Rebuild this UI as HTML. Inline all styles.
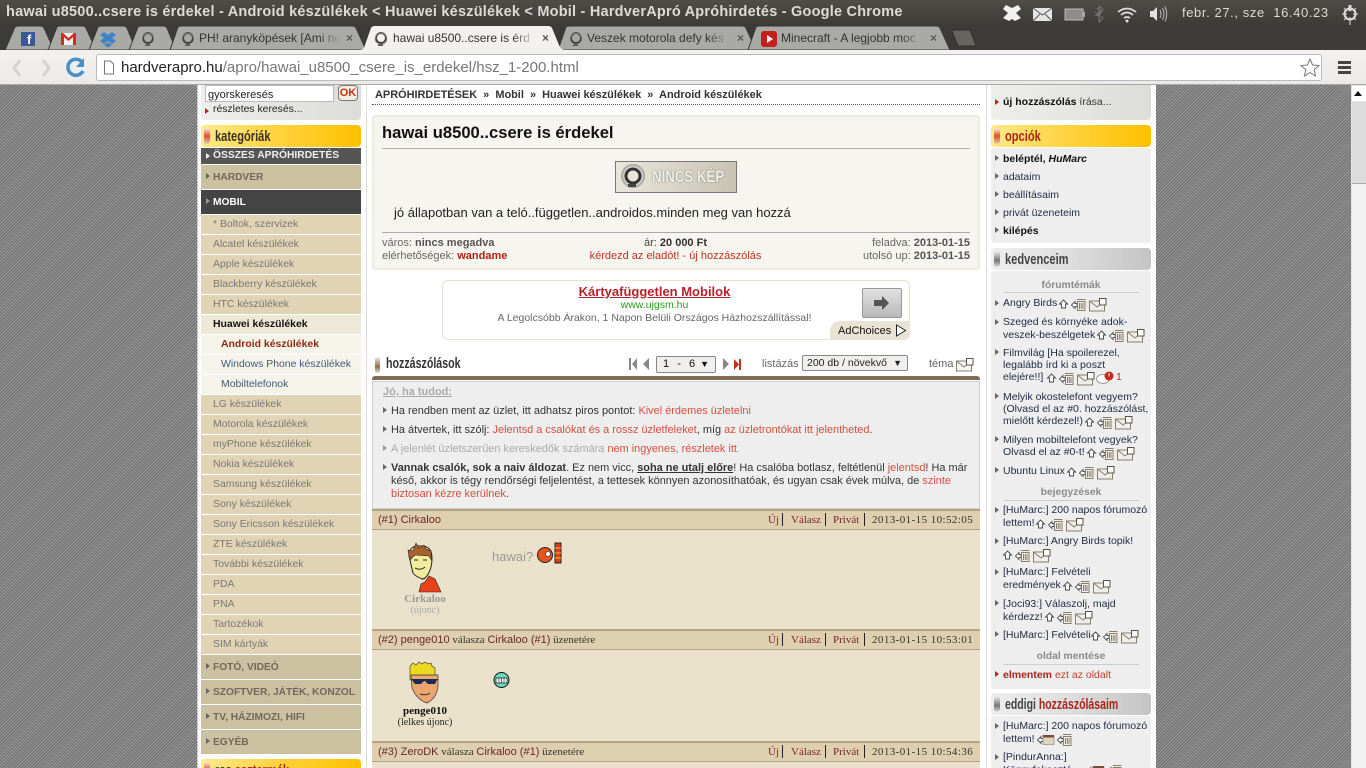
<!DOCTYPE html>
<html><head><meta charset="utf-8"><title>hawai u8500</title>
<style>
*{box-sizing:border-box}
html,body{margin:0;padding:0;width:1366px;height:768px;overflow:hidden;background:#fff}
body{position:relative;font-family:"Liberation Sans",sans-serif;font-size:11px;color:#222}
.a,.t{position:absolute}
.t{white-space:nowrap;line-height:14px;margin-top:1px}
.z{margin-top:0}
svg{position:absolute;overflow:visible}
.hatch{position:absolute;top:85px;height:683px;background:repeating-linear-gradient(135deg,#6e6e6e 0 1.1px,#989898 1.1px 2.2px)}
.tab{position:absolute;top:25px;height:25px}
.tabt{position:absolute;top:30px;font-size:12px;line-height:16px;white-space:nowrap;overflow:hidden;color:#333;-webkit-mask-image:linear-gradient(90deg,#000 85%,transparent);mask-image:linear-gradient(90deg,#000 85%,transparent)}
.x{position:absolute;top:31px;font-size:12px;line-height:14px;color:#555;font-weight:bold}
.row{position:absolute;left:201px;width:160px;height:19px;background:#e0d4b4;color:#777;line-height:20px;padding-left:12px;font-size:10.450px}
.big{position:absolute;left:201px;width:160px;height:24px;background:#cbc0a0;color:#70695c;font-weight:bold;line-height:25px;padding-left:12px;font-size:10.200px}
.sub{background:#f6f3ea;padding-left:20px;color:#3e5a78}
.hd{position:absolute;width:160px;height:22px;border-radius:4px;background:linear-gradient(90deg,#ffe98a,#ffd23c 50%,#ffc000);font-family:"Liberation Sans",sans-serif;font-weight:bold;font-size:15px;line-height:23px;padding-left:14px;white-space:nowrap}
.hd i{position:absolute;left:3px;top:3px;width:6px;height:16px;border-radius:3px;background:linear-gradient(#f5f0e0,#e44b2a 50%,#d8d0b0)}
.hd b{display:inline-block;transform:scaleX(.74);transform-origin:left}
.gh{background:linear-gradient(90deg,#eee,#ddd 50%,#c4c4c4)}
.gh i{background:linear-gradient(#eee,#777 60%,#ddd)}
.ar{position:absolute;width:0;height:0;border-left:4px solid #666;border-top:3.500px solid transparent;border-bottom:3.500px solid transparent}
.rd{border-left-color:#b3261a}
.lt{border-left-color:#eee}
.panel{position:absolute;left:991px;width:160px;background:#eeeeee;border-radius:3px}
.r{color:#1c2a44}
.red{color:#d4503c}
.ph{position:absolute;left:372px;width:608px;background:#decfae;border-top:2px solid #b1a383;border-bottom:1px solid #b1a383;height:21px}
.ph .t{font-family:"Liberation Serif",serif;top:1px}
.ph .pn,.pn{color:#6d2630;font-family:"Liberation Sans",sans-serif;font-size:11px}
.ph .dt{color:#333;font-size:11px;letter-spacing:.42px;left:500px}
.nav{font-family:"Liberation Serif",serif;color:#7c2430;font-size:11px}
.vb{position:absolute;top:2px;width:1px;height:13px;background:#222}
.inf{font-size:10.950px}
</style></head><body>
<svg width="0" height="0" style="position:absolute"><defs>
<symbol id="ic" viewBox="0 0 52 13" overflow="visible">
<path d="M4.500 2 L8.500 6 H6.500 V10 H2.500 V6 H.5 Z" fill="#fff" stroke="#444" stroke-width=".9"/>
<path d="M12.500 7 L16 3.500 V5.500 H18 V8.500 H16 V10.500 Z" fill="#fff" stroke="#555" stroke-width=".9"/>
<rect x="18.500" y="3.500" width="7.500" height="9" fill="#eee" stroke="#8a7d66"/><path d="M20.500 5v6M22.300 5v6M24 5v6M18 1.500h8.500" stroke="#8a7d66" fill="none"/>
<rect x="30.500" y="3" width="15" height="10" fill="#eee" stroke="#8a7d66"/><path d="M30.500 3l7.500 6 7.500-6" fill="none" stroke="#8a7d66"/>
<rect x="40.500" y=".5" width="6.500" height="6.500" fill="#fff" stroke="#554"/>
</symbol>
<symbol id="mail" viewBox="0 0 18 13" overflow="visible">
<rect x=".5" y="3" width="15" height="10" fill="#f4f4f4" stroke="#8a7d66"/><path d="M.5 3l7.500 6 7.500-6" fill="none" stroke="#8a7d66"/>
<rect x="10.500" y=".5" width="6.500" height="6.500" fill="#fff" stroke="#554"/>
</symbol>
<symbol id="ic2" viewBox="0 0 34 13" overflow="visible">
<path d="M.5 7 L4 3.500 V5.500 H6 V8.500 H4 V10.500 Z" fill="#fff" stroke="#555" stroke-width=".9"/>
<rect x="6" y="2.500" width="11" height="9" fill="#ddd5bd" stroke="#8a7d66" stroke-width=".6"/><rect x="6" y="2" width="11" height="2.500" fill="#7a4a3a"/>
<path d="M20.500 7 L24 3.500 V5.500 H26 V8.500 H24 V10.500 Z" fill="#fff" stroke="#555" stroke-width=".9"/>
<rect x="26.500" y="3.500" width="7.500" height="9" fill="#eee" stroke="#8a7d66"/><path d="M28.500 5v6M30.300 5v6M32 5v6M26 1.500h8.500" stroke="#8a7d66" fill="none"/>
</symbol>
<symbol id="ph" viewBox="0 0 14 14"><circle cx="7" cy="6" r="5" fill="none" stroke="#444" stroke-width="2"/><path d="M4 13h5" stroke="#444" stroke-width="2"/><circle cx="7" cy="7" r="6" fill="none" stroke="#aaa" stroke-width=".6"/></symbol>
</defs></svg>

<!-- title bar -->
<div class="a" style="left:0;top:0;width:1366px;height:25px;background:linear-gradient(#4f4d48,#3c3b37)"></div>
<div class="a" style="left:0;top:25px;width:1366px;height:25px;background:#3c3b37"></div>
<div class="t z" style="left:6px;top:4px;font-size:14.500px;line-height:17px;font-weight:bold;color:#dfdbd2;letter-spacing:.22px">hawai u8500..csere is érdekel - Android készülékek &lt; Huawei készülékek &lt; Mobil - HardverApró Apróhirdetés - Google Chrome</div>
<!-- tray -->
<svg style="left:1000px;top:3px" width="366" height="20">
<path d="M7 2l6 3 6-3 3 4-5 4 5 5-6 3-3-2-3 2-6-3 5-5-5-4z" fill="#f2f2f0" transform="translate(-1 0)"/>
<rect x="33" y="5" width="19" height="13" fill="#e6e6e6" rx="1"/><path d="M33 5l9.500 7 9.500-7M33 18l7-7M52 18l-7-7" stroke="#555" fill="none"/>
<rect x="65" y="6" width="18" height="11" fill="#8f8d88" stroke="#bbb"/><rect x="83" y="9" width="2" height="5" fill="#aaa"/>
<path d="M97 5l5 4-5 4 M99 3v16l4-4-8-6M99 3l4 4-8 6" stroke="#777" fill="none"/>
<path d="M118 9q9-7 18 0M121 12q6-5 12 0M124 15q3-2 6 0" stroke="#ddd" stroke-width="1.700" fill="none"/><circle cx="127" cy="18" r="1.500" fill="#ddd"/>
<path d="M150 8h3l4-4v14l-4-4h-3z" fill="#e2e2e2"/><path d="M160 7q2 4 0 8M162.500 5q3 6 0 12M165 3.500q3.500 7.500 0 15" stroke="#bbb" fill="none"/>
<circle cx="350" cy="11" r="5.500" fill="none" stroke="#ddd" stroke-width="2"/><path d="M350 2v7" stroke="#ddd" stroke-width="3"/><path d="M350 2v20M342 11h16M344 5l2 2M356 5l-2 2M344 17l2-2M356 17l-2-2" stroke="#ddd"/><circle cx="350" cy="11" r="3" fill="#3f3e3a"/>
</svg>
<div class="t z" style="left:1182px;top:4px;font-size:13px;line-height:17px;color:#dfdbd2;letter-spacing:.6px">febr. 27., sze&nbsp; 16.40.23</div>

<!-- tabs -->
<svg style="left:0;top:25px" width="1000" height="25">
<g fill="#a9a9a5" stroke="#3a3935">
<path d="M5 25 L15 2 Q16 1 19 1 H40 Q43 1 44 3 L54 25Z"/>
<path d="M48 25 L57 2 Q58 1 61 1 H82 Q85 1 86 3 L96 25Z"/>
<path d="M89 25 L98 2 Q99 1 102 1 H123 Q126 1 127 3 L136 25Z"/>
<path d="M129 25 L138 2 Q139 1 142 1 H163 Q166 1 167 3 L176 25Z"/>
<path d="M170 25 L178 2 Q179 1 182 1 H352 Q355 1 356 3 L366 25Z"/>
<path d="M558 25 L566 2 Q567 1 570 1 H742 Q745 1 746 3 L756 25Z"/>
<path d="M748 25 L756 2 Q757 1 760 1 H936 Q939 1 940 3 L950 25Z"/>
</g>
<path d="M360 25 Q364 25 365 20 L371 3 Q372 1 375 1 H548 Q551 1 552 3 L559 20 Q561 25 565 25Z" fill="#f2f1f0"/>
<path d="M952 6 Q952 5 954 5 H970 L976 20 Q976 21 974 21 H958 Z" fill="#65645f" stroke="#2f2e2b"/>
</svg>
<!-- favicons -->
<div class="a" style="left:21px;top:32px;width:14px;height:14px;background:#3b5998"></div><div class="t z" style="left:27px;top:33px;color:#fff;font-weight:bold;font-size:13px">f</div>
<svg style="left:61px;top:33px" width="16" height="13"><rect width="15" height="12" fill="#eee"/><path d="M0 0v12h3V4l4.500 4L12 4v8h3V0h-2L7.500 5 2 0z" fill="#d02c20"/></svg>
<svg style="left:100px;top:31px" width="16" height="17"><path d="M4 1l4 3 4-3 4 3-4 3 4 3-4 3-4-3-4 3-4-3 4-3-4-3z" fill="#3d85c6"/><path d="M4 14l4 2.500 4-2.500-4-2.500z" fill="#3d85c6"/></svg>
<svg style="left:141px;top:32px" width="14" height="15"><use href="#ph" width="14" height="14"/></svg>
<svg style="left:181px;top:32px" width="14" height="15"><use href="#ph" width="14" height="14"/></svg>
<svg style="left:374px;top:32px" width="14" height="15"><use href="#ph" width="14" height="14"/></svg>
<svg style="left:569px;top:32px" width="14" height="15"><use href="#ph" width="14" height="14"/></svg>
<svg style="left:761px;top:31px" width="16" height="16"><rect width="16" height="16" rx="3" fill="#c4201b"/><path d="M6 4l6 4-6 4z" fill="#fff"/></svg>
<div class="tabt" style="left:199px;width:142px">PH! aranyköpések [Ami ne</div>
<div class="tabt" style="left:393px;width:142px">hawai u8500..csere is érd</div>
<div class="tabt" style="left:587px;width:142px">Veszek motorola defy kés</div>
<div class="tabt" style="left:781px;width:142px">Minecraft - A legjobb moc</div>
<div class="x" style="left:346px">×</div><div class="x" style="left:542px">×</div><div class="x" style="left:737px">×</div><div class="x" style="left:930px">×</div>

<!-- toolbar -->
<div class="a" style="left:0;top:50px;width:1366px;height:35px;background:linear-gradient(#f2f1f0,#ebeae8);border-bottom:1px solid #a8a8a8"></div>
<svg style="left:0;top:50px" width="100" height="35">
<path d="M20 10l-6 8 6 8" fill="none" stroke="#d4d4d4" stroke-width="3"/>
<path d="M43 10l6 8-6 8" fill="none" stroke="#d4d4d4" stroke-width="3"/>
<path d="M82 12a8 8 0 1 0 1 9" fill="none" stroke="#4a90c8" stroke-width="3.500"/><path d="M84 8v9h-8z" fill="#4a90c8"/>
</svg>
<div class="a" style="left:96px;top:54px;width:1226px;height:27px;background:#fff;border:1px solid #bbb;border-radius:3px"></div>
<svg style="left:103px;top:60px" width="12" height="16"><path d="M1.500 1h6l3 3v10h-9z" fill="#fff" stroke="#777"/></svg>
<div class="t z" style="left:121px;top:59px;font-size:15px;line-height:18px;color:#222">hardverapro.hu<span style="color:#777">/apro/hawai_u8500_csere_is_erdekel/hsz_1-200.html</span></div>
<svg style="left:1300px;top:58px" width="20" height="20"><path d="M10 1l2.600 6 6.400.500-4.900 4.200 1.500 6.300L10 14.600 4.400 18l1.500-6.300L1 7.500 7.400 7z" fill="#fff" stroke="#777"/></svg>
<div class="a" style="left:1338px;top:61px;width:13px;height:3px;background:#444"></div><div class="a" style="left:1338px;top:66px;width:13px;height:3px;background:#444"></div><div class="a" style="left:1338px;top:71px;width:13px;height:3px;background:#444"></div>

<!-- page bg -->
<div class="hatch" style="left:0;width:197px"></div>
<div class="hatch" style="left:1156px;width:195px"></div>
<div class="a" style="left:1351px;top:85px;width:15px;height:683px;background:#e4e4e4"></div>
<div class="a" style="left:1352px;top:86px;width:14px;height:15px;background:#fff"></div>
<svg style="left:1354px;top:91px" width="10" height="6"><path d="M4 0l4 5H0z" fill="#111"/></svg>
<div class="a" style="left:1352px;top:102px;width:14px;height:82px;background:#dcdcdc;border-bottom:1px solid #aaa"></div>
<div class="a" style="left:1352px;top:184px;width:14px;height:584px;background:#f2f2f2"></div>
<div class="a" style="left:366px;top:85px;width:1px;height:683px;background:#ddd"></div>
<div class="a" style="left:986px;top:85px;width:1px;height:683px;background:#ddd"></div>
<div class="a" style="left:197px;top:85px;width:1px;height:683px;background:#ccc"></div>

<!-- left col -->
<div class="a" style="left:201px;top:85px;width:160px;height:35px;background:linear-gradient(90deg,#eeeeec,#dcdcd8);border-radius:0 0 4px 4px"></div>
<div class="t z" style="left:205px;top:85px;width:129px;height:17px;background:#fff;border:1px solid #bbb;line-height:18px;padding-left:2px;font-size:11px;color:#222">gyorskeresés</div>
<div class="t z" style="left:338px;top:85px;width:20px;height:16px;background:#f3ece0;border:1px solid #777;border-radius:4px;font-weight:bold;color:#c33118;text-align:center;line-height:14px;font-size:11px">OK</div>
<div class="ar rd" style="left:205px;top:108px"></div>
<div class="t" style="left:213px;top:102px;font-size:10.400px;color:#222">részletes keresés...</div>
<div class="hd" style="left:201px;top:125px;color:#3a3226"><i></i><b>kategóriák</b></div>
<div class="a" style="left:201px;top:148px;width:160px;height:16px;background:#555;color:#eee;font-weight:bold;font-size:10.300px;line-height:16px;padding-left:12px">ÖSSZES APRÓHIRDETÉS</div><div class="ar lt" style="left:206px;top:153px"></div>
<div class="big" style="top:165px">HARDVER</div><div class="ar" style="left:206px;top:173px"></div>
<div class="big" style="top:190px;background:#444;color:#fff">MOBIL</div><div class="ar" style="left:206px;top:198px;border-left-color:#999"></div>
<div class="row" style="top:215px">* Boltok, szervizek</div>
<div class="row" style="top:235px">Alcatel készülékek</div>
<div class="row" style="top:255px">Apple készülékek</div>
<div class="row" style="top:275px">Blackberry készülékek</div>
<div class="row" style="top:295px">HTC készülékek</div>
<div class="row" style="top:315px;background:#eee8d6;color:#111;font-weight:bold">Huawei készülékek</div>
<div class="row sub" style="top:335px;color:#8f2a12;font-weight:bold">Android készülékek</div>
<div class="row sub" style="top:355px">Windows Phone készülékek</div>
<div class="row sub" style="top:375px">Mobiltelefonok</div>
<div class="row" style="top:395px">LG készülékek</div>
<div class="row" style="top:415px">Motorola készülékek</div>
<div class="row" style="top:435px">myPhone készülékek</div>
<div class="row" style="top:455px">Nokia készülékek</div>
<div class="row" style="top:475px">Samsung készülékek</div>
<div class="row" style="top:495px">Sony készülékek</div>
<div class="row" style="top:515px">Sony Ericsson készülékek</div>
<div class="row" style="top:535px">ZTE készülékek</div>
<div class="row" style="top:555px">További készülékek</div>
<div class="row" style="top:575px">PDA</div>
<div class="row" style="top:595px">PNA</div>
<div class="row" style="top:615px">Tartozékok</div>
<div class="row" style="top:635px">SIM kártyák</div>
<div class="big" style="top:655px">FOTÓ, VIDEÓ</div><div class="ar" style="left:206px;top:663px"></div>
<div class="big" style="top:680px">SZOFTVER, JÁTÉK, KONZOL</div><div class="ar" style="left:206px;top:688px"></div>
<div class="big" style="top:705px">TV, HÁZIMOZI, HIFI</div><div class="ar" style="left:206px;top:713px"></div>
<div class="big" style="top:730px">EGYÉB</div><div class="ar" style="left:206px;top:738px"></div>
<div class="hd" style="left:201px;top:759px;color:#3a3226"><i></i><b>rss <span style="color:#a8261a">esztermék</span></b></div>

<!-- main -->
<div class="t" style="left:375px;top:87px;font-weight:bold;color:#333;font-size:10.950px">APRÓHIRDETÉSEK &nbsp;»&nbsp; Mobil &nbsp;»&nbsp; Huawei készülékek &nbsp;»&nbsp; Android készülékek</div>
<div class="a" style="left:372px;top:104px;width:608px;border-top:1px dotted #555"></div>
<div class="a" style="left:372px;top:115px;width:608px;height:155px;background:#f7f5ef;border:2px solid #efebdc;border-radius:3px"></div>
<div class="t z" style="left:382px;top:123px;font-size:16.600px;line-height:19px;font-weight:bold;color:#111">hawai u8500..csere is érdekel</div>
<div class="a" style="left:382px;top:148px;width:588px;height:1px;background:#aaa"></div>
<div class="a" style="left:615px;top:161px;width:122px;height:32px;background:linear-gradient(90deg,#e9e5da,#c9c3b3);border:1px solid #777"></div>
<svg style="left:621px;top:164px" width="26" height="26"><circle cx="12" cy="12" r="11" fill="#d8d4c8" stroke="#aaa" stroke-width="2"/><circle cx="12" cy="12" r="7" fill="#e8e4d8" stroke="#333" stroke-width="3"/><rect x="7" y="20" width="8" height="3" fill="#444"/></svg>
<div class="t z" style="left:652px;top:168px;font-size:17px;line-height:18px;font-weight:bold;color:#f0efe8;text-shadow:0 0 1.500px #555;transform:scaleX(.78);transform-origin:left">NINCS KÉP</div>
<div class="t" style="left:394px;top:204px;font-size:13px;line-height:16px;color:#222">jó állapotban van a teló..független..androidos.minden meg van hozzá</div>
<div class="a" style="left:382px;top:232px;width:588px;height:1px;background:#aaa"></div>
<div class="t" style="left:382px;top:235px;color:#666">város: <b style="color:#555">nincs megadva</b></div>
<div class="t" style="left:382px;top:248px;color:#666">elérhetőségek: <b style="color:#b2220f">wandame</b></div>
<div class="t" style="left:370px;width:608px;top:235px;text-align:center;color:#444;padding-left:3px">ár: <b style="color:#333">20 000 Ft</b></div>
<div class="t" style="left:370px;width:608px;top:248px;text-align:center;color:#b8341c;padding-left:3px">kérdezd az eladót! - új hozzászólás</div>
<div class="t" style="right:396px;top:235px;color:#666">feladva: <b style="color:#555">2013-01-15</b></div>
<div class="t" style="right:396px;top:248px;color:#666">utolsó up: <b style="color:#555">2013-01-15</b></div>

<!-- ad -->
<div class="a" style="left:442px;top:280px;width:468px;height:60px;background:#fff;border:1px solid #e9e3cd;border-radius:6px"></div>
<div class="t" style="left:442px;top:284px;width:425px;text-align:center;font-size:13px;font-weight:bold;color:#b8202a;text-decoration:underline">Kártyafüggetlen Mobilok</div>
<div class="t" style="left:442px;top:297px;width:425px;text-align:center;color:#2a9a1a;font-size:10.500px">www.ujgsm.hu</div>
<div class="t" style="left:442px;top:310px;width:425px;text-align:center;color:#666;font-size:10.500px">A Legolcsóbb Árakon, 1 Napon Belüli Országos Házhozszállítással!</div>
<div class="a" style="left:862px;top:288px;width:40px;height:30px;background:linear-gradient(#e2e2e2,#b8b8b8);border:1px solid #999;border-radius:2px"></div>
<svg style="left:873px;top:295px" width="18" height="16"><path d="M1 5h8V1l7 7-7 7v-4H1z" fill="#555"/></svg>
<div class="a" style="left:830px;top:321px;width:80px;height:19px;background:#e9e3d3;border-radius:10px 0 6px 0"></div>
<div class="t" style="left:838px;top:323px;color:#111;font-size:11px">AdChoices</div>
<svg style="left:895px;top:324px" width="12" height="13"><path d="M1.500 1v11l9-5.500z" fill="#fff" stroke="#222"/></svg>

<!-- hozzaszolasok -->
<div class="a" style="left:375px;top:357px;width:5px;height:16px;border-radius:3px;background:linear-gradient(#eee,#8a7040 60%,#ddd)"></div>
<div class="t z" style="left:386px;top:357px;font-size:15px;font-weight:bold;color:#333;transform:scaleX(.71);transform-origin:left">hozzászólások</div>
<svg style="left:628px;top:357px" width="125" height="16">
<path d="M1 1h2v12H1zM9 1v12l-5-6z" fill="#888"/><path d="M21 1v12l-6-6z" fill="#888"/>
<path d="M95 1v12l6-6z" fill="#888"/><path d="M106 2v11l5-5.500z" fill="#c33118"/><path d="M111 2h2v11h-2z" fill="#c33118"/>
</svg>
<div class="t z" style="left:656px;top:356px;width:60px;height:17px;background:#f0efee;border:1px solid #888;border-radius:2px;line-height:15px;color:#111;padding-left:6px;word-spacing:1px">1 &nbsp;- &nbsp;6<span class="a" style="right:6px;top:0;font-size:9px">▼</span></div>
<div class="t" style="left:762px;top:356px;color:#666">listázás</div>
<div class="t" style="left:802px;top:354px;width:106px;height:16px;background:#f0efee;border:1px solid #888;border-radius:2px;line-height:14px;color:#222;padding-left:4px;font-size:10.500px">200 db / növekvő<span class="a" style="right:5px;top:0;font-size:9px">▼</span></div>
<div class="t" style="left:929px;top:356px;color:#666">téma</div>
<svg style="left:956px;top:358px" width="18" height="13"><use href="#mail" width="18" height="13"/></svg>
<div class="a" style="left:372px;top:376px;width:608px;height:4px;background:#7d6d52;border-radius:3px 3px 0 0"></div>

<!-- info -->
<div class="a" style="left:372px;top:381px;width:608px;height:128px;background:#eeeeee;border:1px solid #ccc"></div>
<div class="t" style="left:383px;top:384px;font-weight:bold;color:#aaa;text-decoration:underline">Jó, ha tudod:</div>
<div class="ar" style="left:383px;top:407px"></div>
<div class="t inf" style="left:391px;top:403px;color:#333">Ha rendben ment az üzlet, itt adhatsz piros pontot: <span class="red">Kivel érdemes üzletelni</span></div>
<div class="ar" style="left:383px;top:426px"></div>
<div class="t inf" style="left:391px;top:422px;color:#333">Ha átvertek, itt szólj: <span class="red">Jelentsd a csalókat és a rossz üzletfeleket</span>, míg <span class="red">az üzletrontókat itt jelentheted</span>.</div>
<div class="ar" style="left:383px;top:445px;border-left-color:#999"></div>
<div class="t inf" style="left:391px;top:441px;color:#aaa">A jelenlét üzletszerűen kereskedők számára <span class="red">nem ingyenes, részletek itt</span>.</div>
<div class="ar" style="left:383px;top:464px"></div>
<div class="t inf" style="left:391px;top:460px;color:#333"><b>Vannak csalók, sok a naiv áldozat</b>. Ez nem vicc, <b style="text-decoration:underline">soha ne utalj előre</b>! Ha csalóba botlasz, feltétlenül <span class="red">jelentsd</span>! Ha már</div>
<div class="t inf" style="left:391px;top:473px;color:#333">késő, akkor is tégy rendőrségi feljelentést, a tettesek könnyen azonosíthatóak, és ugyan csak évek múlva, de <span class="red">szinte</span></div>
<div class="t inf" style="left:391px;top:486px;color:#333"><span class="red">biztosan kézre kerülnek</span>.</div>

<!-- posts -->
<div class="a" style="left:372px;top:510px;width:608px;height:258px;background:#e9e1c9"></div>
<div class="ph" style="top:509px"><div class="t pn" style="left:6px">(#1) Cirkaloo</div>
<div class="t nav" style="left:396px">Új</div><div class="vb" style="left:410px"></div><div class="t nav" style="left:419px">Válasz</div><div class="vb" style="left:453px"></div><div class="t nav" style="left:461px">Privát</div><div class="vb" style="left:492px"></div><div class="t dt">2013-01-15 10:52:05</div></div>
<div class="ph" style="top:629px"><div class="t" style="left:6px;font-size:11px;color:#333"><span class="pn">(#2) penge010</span> válasza <span class="pn">Cirkaloo (#1)</span> üzenetére</div>
<div class="t nav" style="left:396px">Új</div><div class="vb" style="left:410px"></div><div class="t nav" style="left:419px">Válasz</div><div class="vb" style="left:453px"></div><div class="t nav" style="left:461px">Privát</div><div class="vb" style="left:492px"></div><div class="t dt">2013-01-15 10:53:01</div></div>
<div class="ph" style="top:741px"><div class="t" style="left:6px;font-size:11px;color:#333"><span class="pn">(#3) ZeroDK</span> válasza <span class="pn">Cirkaloo (#1)</span> üzenetére</div>
<div class="t nav" style="left:396px">Új</div><div class="vb" style="left:410px"></div><div class="t nav" style="left:419px">Válasz</div><div class="vb" style="left:453px"></div><div class="t nav" style="left:461px">Privát</div><div class="vb" style="left:492px"></div><div class="t dt">2013-01-15 10:54:36</div></div>

<svg style="left:405px;top:542px" width="40" height="52">
<path d="M4 14Q4 3 16 4Q27 4 27 16Q27 30 19 37Q12 36 8 31Z" fill="#f2ec9c" stroke="#222"/>
<path d="M4 14L3 8l5 1 3-8 3 5 5-3 2 4 5 2 1 10-3-5-14-1-5 5z" fill="#a8612c" stroke="#222" stroke-width=".6"/>
<path d="M9 18h4M18 18h4M10 26q5 3 10-1" stroke="#222" fill="none"/>
<path d="M12 33q4 5 8 2l-3 3z" fill="#6b4a20"/>
<path d="M14 50l2-8 4-2 4-6 6 3 6 13z" fill="#e8431a" stroke="#222" stroke-width=".6"/>
</svg>
<div class="t z" style="left:395px;top:592px;width:60px;text-align:center;font-family:'Liberation Serif',serif;font-weight:bold;color:#999;font-size:11px">Cirkaloo</div>
<div class="t z" style="left:395px;top:604px;width:60px;text-align:center;font-family:'Liberation Serif',serif;color:#aaa;font-size:10px">(újonc)</div>
<div class="t" style="left:492px;top:548px;font-size:13px;line-height:16px;color:#999">hawai?</div>
<svg style="left:536px;top:542px" width="26" height="22"><circle cx="9" cy="13" r="7.500" fill="#e8541e" stroke="#222"/><circle cx="12" cy="12" r="2.500" fill="#fff" stroke="#222" stroke-width=".6"/><rect x="19" y="1" width="6" height="20" fill="#d8401a" stroke="#222"/><path d="M19 6h6M19 11h6M19 16h6" stroke="#f0c040"/></svg>

<svg style="left:407px;top:660px" width="36" height="46">
<path d="M3 6l3-3 3 2 3-3 3 2 3-2 3 2 3-1 1 3 3 2v12H3z" fill="#ecd81e" stroke="#333" stroke-width=".6"/>
<path d="M4 15H31V26Q30 38 20 43Q10 40 5 28Z" fill="#eba56e" stroke="#333" stroke-width=".7"/>
<path d="M3 19h29l-2 1-2 4h-7l-3-3h-1l-3 3H8l-3-4z" fill="#1d2a54"/>
<path d="M13 34q6 2 10-1" stroke="#333" fill="none"/>
</svg>
<div class="t z" style="left:395px;top:704px;width:60px;text-align:center;font-family:'Liberation Serif',serif;font-weight:bold;color:#111;font-size:11px">penge010</div>
<div class="t z" style="left:390px;top:716px;width:70px;text-align:center;font-family:'Liberation Serif',serif;color:#222;font-size:10px">(lelkes újonc)</div>
<svg style="left:493px;top:672px" width="18" height="16"><circle cx="8.500" cy="8" r="7.500" fill="#66dcc0" stroke="#111"/><rect x="3" y="6" width="11" height="5" fill="#fff" stroke="#111" stroke-width=".7"/><path d="M6 6v5M8.500 6v5M11 6v5" stroke="#111" stroke-width=".6"/></svg>

<!-- right col -->
<div class="a" style="left:991px;top:85px;width:160px;height:35px;background:linear-gradient(90deg,#eeeeec,#dcdcd8);border-radius:0 0 4px 4px"></div>
<div class="ar rd" style="left:995px;top:99px"></div>
<div class="t" style="left:1003px;top:94px;font-size:10.500px;color:#333"><b style="color:#111">új hozzászólás</b> írása...</div>
<div class="hd" style="left:991px;top:125px;color:#a8261a"><i></i><b>opciók</b></div>
<div class="panel" style="top:148px;height:95px"></div>
<div class="ar" style="left:995px;top:155px"></div><div class="t" style="left:1003px;top:151px;font-weight:bold;color:#111;font-size:10.500px">beléptél, <i>HuMarc</i></div>
<div class="ar" style="left:995px;top:173px"></div><div class="t r" style="left:1003px;top:169px;font-size:10.500px">adataim</div>
<div class="ar" style="left:995px;top:191px"></div><div class="t r" style="left:1003px;top:187px;font-size:10.500px">beállításaim</div>
<div class="ar" style="left:995px;top:209px"></div><div class="t r" style="left:1003px;top:205px;font-size:10.500px">privát üzeneteim</div>
<div class="ar" style="left:995px;top:227px"></div><div class="t" style="left:1003px;top:223px;font-weight:bold;color:#111;font-size:10.500px">kilépés</div>

<div class="hd gh" style="left:991px;top:248px;color:#444"><i></i><b>kedvenceim</b></div>
<div class="panel" style="top:271px;height:418px"></div>
<div class="t" style="left:1003px;top:278px;width:136px;text-align:center;font-weight:bold;color:#8a8a8a;font-size:10.300px">fórumtémák</div>
<div class="a" style="left:1003px;top:292px;width:136px;height:1px;background:#ccc"></div>

<div class="ar" style="left:995px;top:300px"></div><div class="t r" style="left:1003px;top:295px;font-size:10.500px">Angry Birds</div>
<svg style="left:1059px;top:298px" width="52" height="13"><use href="#ic" width="52" height="13"/></svg>
<div class="ar" style="left:995px;top:319px"></div><div class="t r" style="left:1003px;top:314px;font-size:10.500px">Szeged és környéke adok-</div>
<div class="t r" style="left:1003px;top:327px;font-size:10.500px">veszek-beszélgetek</div>
<svg style="left:1097px;top:329px" width="52" height="13"><use href="#ic" width="52" height="13"/></svg>
<div class="ar" style="left:995px;top:349px"></div><div class="t r" style="left:1003px;top:345px;font-size:10.500px">Filmvilág [Ha spoilerezel,</div>
<div class="t r" style="left:1003px;top:357px;font-size:10.500px">legalább írd ki a poszt</div>
<div class="t r" style="left:1003px;top:369px;font-size:10.500px">elejére!!]</div>
<svg style="left:1047px;top:372px" width="52" height="13"><use href="#ic" width="52" height="13"/></svg>
<svg style="left:1096px;top:370px" width="20" height="15"><ellipse cx="7" cy="9" rx="6.500" ry="4.500" fill="#fff" stroke="#999"/><circle cx="13" cy="6" r="4.500" fill="#c8281c"/><path d="M13 3v3.500" stroke="#fff"/></svg>
<div class="t" style="left:1116px;top:369px;color:#c8281c;font-size:10.500px">1</div>
<div class="ar" style="left:995px;top:393px"></div><div class="t r" style="left:1003px;top:389px;font-size:10.500px">Melyik okostelefont vegyem?</div>
<div class="t r" style="left:1003px;top:401px;font-size:10.500px">(Olvasd el az #0. hozzászólást,</div>
<div class="t r" style="left:1003px;top:413px;font-size:10.500px">mielőtt kérdezel!)</div>
<svg style="left:1085px;top:416px" width="52" height="13"><use href="#ic" width="52" height="13"/></svg>
<div class="ar" style="left:995px;top:436px"></div><div class="t r" style="left:1003px;top:432px;font-size:10.500px">Milyen mobiltelefont vegyek?</div>
<div class="t r" style="left:1003px;top:444px;font-size:10.500px">Olvasd el az #0-t!</div>
<svg style="left:1087px;top:447px" width="52" height="13"><use href="#ic" width="52" height="13"/></svg>
<div class="ar" style="left:995px;top:467px"></div><div class="t r" style="left:1003px;top:463px;font-size:10.500px">Ubuntu Linux</div>
<svg style="left:1067px;top:466px" width="52" height="13"><use href="#ic" width="52" height="13"/></svg>
<div class="t" style="left:1003px;top:485px;width:136px;text-align:center;font-weight:bold;color:#8a8a8a;font-size:10.300px">bejegyzések</div>
<div class="a" style="left:1003px;top:500px;width:136px;height:1px;background:#ccc"></div>
<div class="ar" style="left:995px;top:507px"></div><div class="t r" style="left:1003px;top:502px;font-size:10.500px">[HuMarc:] 200 napos fórumozó</div>
<div class="t r" style="left:1003px;top:515px;font-size:10.500px">lettem!</div>
<svg style="left:1036px;top:518px" width="52" height="13"><use href="#ic" width="52" height="13"/></svg>
<div class="ar" style="left:995px;top:538px"></div><div class="t r" style="left:1003px;top:533px;font-size:10.500px">[HuMarc:] Angry Birds topik!</div>
<svg style="left:1003px;top:549px" width="52" height="13"><use href="#ic" width="52" height="13"/></svg>
<div class="ar" style="left:995px;top:569px"></div><div class="t r" style="left:1003px;top:564px;font-size:10.500px">[HuMarc:] Felvételi</div>
<div class="t r" style="left:1003px;top:577px;font-size:10.500px">eredmények</div>
<svg style="left:1063px;top:580px" width="52" height="13"><use href="#ic" width="52" height="13"/></svg>
<div class="ar" style="left:995px;top:600px"></div><div class="t r" style="left:1003px;top:596px;font-size:10.500px">[Joci93:] Válaszolj, majd</div>
<div class="t r" style="left:1003px;top:609px;font-size:10.500px">kérdezz!</div>
<svg style="left:1045px;top:611px" width="52" height="13"><use href="#ic" width="52" height="13"/></svg>
<div class="ar" style="left:995px;top:631px"></div><div class="t r" style="left:1003px;top:627px;font-size:10.500px">[HuMarc:] Felvételi</div>
<svg style="left:1091px;top:630px" width="52" height="13"><use href="#ic" width="52" height="13"/></svg>
<div class="t" style="left:1003px;top:649px;width:136px;text-align:center;font-weight:bold;color:#8a8a8a;font-size:10.300px">oldal mentése</div>
<div class="a" style="left:1003px;top:664px;width:136px;height:1px;background:#ccc"></div>
<div class="ar rd" style="left:995px;top:671px"></div><div class="t" style="left:1003px;top:667px;font-size:10.500px;color:#c0402a"><b style="color:#a8261a">elmentem</b> ezt az oldalt</div>

<div class="hd gh" style="left:991px;top:693px;color:#444"><i></i><b style="transform:scaleX(.7)">eddigi <span style="color:#a8261a">hozzászólásaim</span></b></div>
<div class="panel" style="top:716px;height:52px"></div>
<div class="ar" style="left:995px;top:723px"></div><div class="t r" style="left:1003px;top:718px;font-size:10.500px">[HuMarc:] 200 napos fórumozó</div>
<div class="t r" style="left:1003px;top:731px;font-size:10.500px">lettem!</div>
<svg style="left:1037px;top:733px" width="34" height="13"><use href="#ic2" width="34" height="13"/></svg>
<div class="ar" style="left:995px;top:754px"></div><div class="t r" style="left:1003px;top:749px;font-size:10.500px">[PindurAnna:]</div>
<div class="t r" style="left:1003px;top:762px;font-size:10.500px">Könnyfakasztó</div>
<svg style="left:1087px;top:764px" width="34" height="13"><use href="#ic2" width="34" height="13"/></svg>
</body></html>
